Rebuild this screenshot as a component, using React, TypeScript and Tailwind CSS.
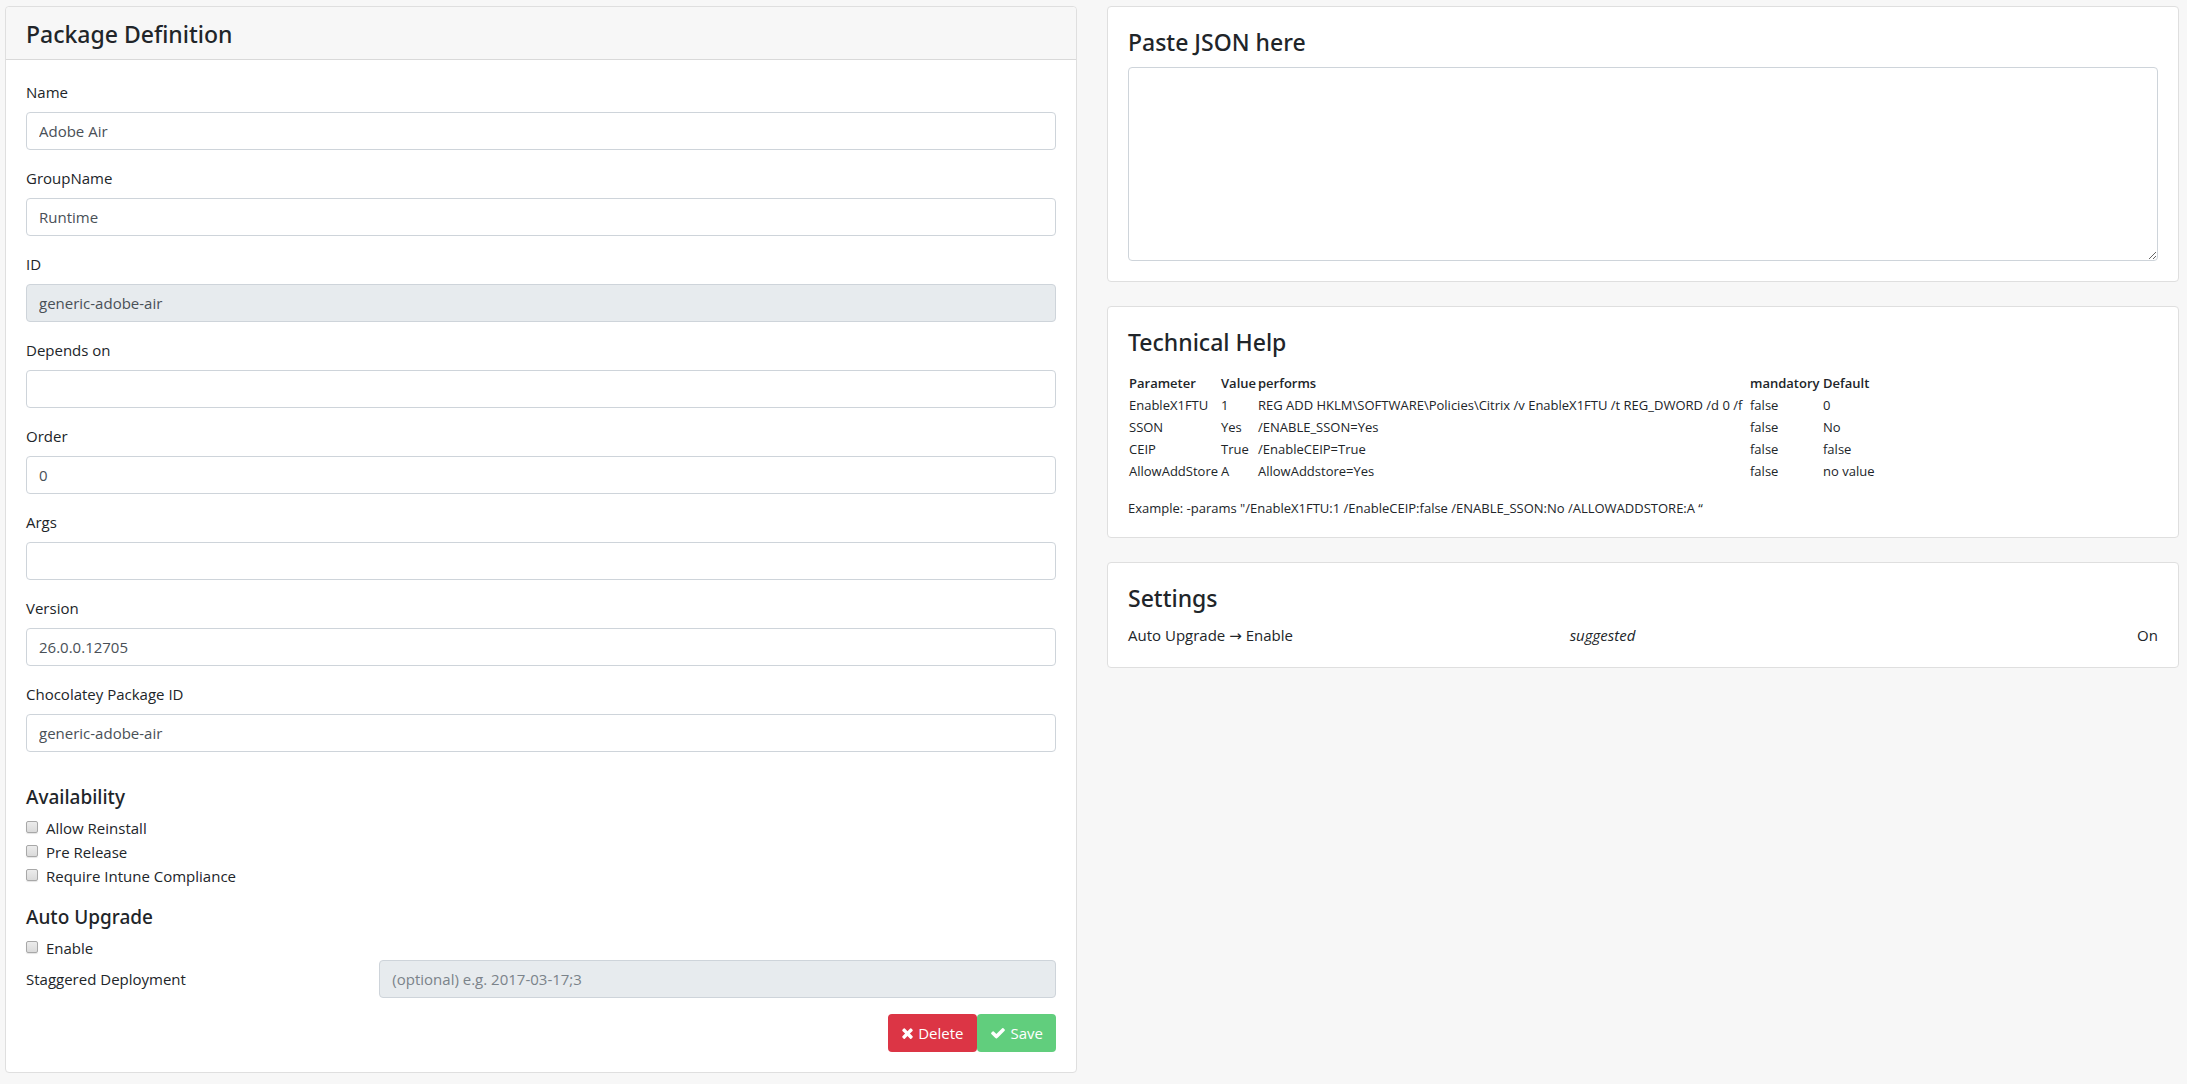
import { useState } from "react";
import type { ReactNode } from "react";

type Field = { id: string; label: string; value: string; disabled?: boolean };

const fields: Field[] = [
  { id: "name", label: "Name", value: "Adobe Air" },
  { id: "group", label: "GroupName", value: "Runtime" },
  { id: "id", label: "ID", value: "generic-adobe-air", disabled: true },
  { id: "depends", label: "Depends on", value: "" },
  { id: "order", label: "Order", value: "0" },
  { id: "args", label: "Args", value: "" },
  { id: "version", label: "Version", value: "26.0.0.12705" },
  { id: "choco", label: "Chocolatey Package ID", value: "generic-adobe-air" },
];

const helpRows = [
  ["EnableX1FTU", "1", "REG ADD HKLM\\SOFTWARE\\Policies\\Citrix /v EnableX1FTU /t REG_DWORD /d 0 /f", "false", "0"],
  ["SSON", "Yes", "/ENABLE_SSON=Yes", "false", "No"],
  ["CEIP", "True", "/EnableCEIP=True", "false", "false"],
  ["AllowAddStore", "A", "AllowAddstore=Yes", "false", "no value"],
];

const control =
  "block w-full rounded border border-[#ced4da] bg-white px-3 text-[15px] leading-6 text-[#495057] outline-none placeholder:text-[#7b838a] focus:border-[#80bdff] disabled:bg-[#e7ebee]";

const title = "font-['Noto_Sans','Open_Sans',sans-serif] text-[23px] leading-[30px] font-medium";
const subtitle = "mb-1.5 font-['Noto_Sans','Open_Sans',sans-serif] text-[19px] leading-[26px] font-medium";

function Card({ children }: { children: ReactNode }) {
  return <section className="rounded border border-[#dfdfdf] bg-white">{children}</section>;
}

function TextField({ field }: { field: Field }) {
  const [value, setValue] = useState(field.value);
  return (
    <div className="mb-4">
      <label htmlFor={field.id} className="mb-2 block">
        {field.label}
      </label>
      <input
        id={field.id}
        type="text"
        value={value}
        disabled={field.disabled}
        onChange={(e) => setValue(e.target.value)}
        className={`${control} h-[38px]`}
      />
    </div>
  );
}

function Check({ label }: { label: string }) {
  return (
    <label className="flex items-start">
      <input
        type="checkbox"
        className="mt-[5px] mr-2 size-3 appearance-none rounded-xs border border-[#a8a8a8] bg-linear-to-b from-[#ececec] to-[#dadada] shadow-[0_1px_1px_#e4e4e4] checked:bg-[#0075ff] checked:bg-none"
      />
      {label}
    </label>
  );
}

export default function App() {
  return (
    <main className="min-h-screen bg-[#f7f7f7] pt-[6px] pr-2 pb-[11px] pl-[5px] font-['Open_Sans',sans-serif] text-[15px] leading-6 text-[#212529]">
      <div className="grid grid-cols-2 items-start gap-[30px]">
        <Card>
          <header className="rounded-t border-b border-[#d9d9d9] bg-[#f7f7f7] px-5 pt-3 pb-2.5">
            <h1 className={title}>Package Definition</h1>
          </header>
          <form className="p-5" onSubmit={(e) => e.preventDefault()}>
            {fields.map((f) => (
              <TextField key={f.id} field={f} />
            ))}

            <h2 className={`mt-8 ${subtitle}`}>Availability</h2>
            <Check label="Allow Reinstall" />
            <Check label="Pre Release" />
            <Check label="Require Intune Compliance" />

            <h2 className={`mt-4 ${subtitle}`}>Auto Upgrade</h2>
            <Check label="Enable" />
            <div className="-mx-[15px] flex items-center">
              <label htmlFor="staggered" className="w-1/3 px-[15px]">
                Staggered Deployment
              </label>
              <div className="w-2/3 px-[15px]">
                <input
                  id="staggered"
                  type="text"
                  disabled
                  placeholder="(optional) e.g. 2017-03-17;3"
                  className={`${control} h-[38px]`}
                />
              </div>
            </div>

            <div className="mt-4 flex justify-end text-white">
              <button type="button" className="flex h-[38px] items-center gap-1 rounded bg-[#dc3545] px-[13px]">
                <svg viewBox="192 0 1408 1792" className="h-4 w-[13px] fill-current" aria-hidden="true">
                  <path d="M1490 1322q0 40-28 68l-136 136q-28 28-68 28t-68-28l-294-294-294 294q-28 28-68 28t-68-28l-136-136q-28-28-28-68t28-68l294-294-294-294q-28-28-28-68t28-68l136-136q28-28 68-28t68 28l294 294 294-294q28-28 68-28t68 28l136 136q28 28 28 68t-28 68l-294 294 294 294q28 28 28 68z" />
                </svg>
                Delete
              </button>
              <button type="submit" className="flex h-[38px] items-center gap-[5px] rounded bg-[#61ce7d] px-[13px]">
                <svg viewBox="0 0 1792 1792" className="size-4 fill-current" aria-hidden="true">
                  <path d="M1671 566q0 40-28 68l-724 724-136 136q-28 28-68 28t-68-28l-136-136-362-362q-28-28-28-68t28-68l136-136q28-28 68-28t68 28l294 295 656-657q28-28 68-28t68 28l136 136q28 28 28 68z" />
                </svg>
                Save
              </button>
            </div>
          </form>
        </Card>

        <div className="flex flex-col gap-6">
          <Card>
            <div className="p-5">
              <label htmlFor="json" className={`mb-2.5 block ${title}`}>
                Paste JSON here
              </label>
              <textarea id="json" className={`${control} h-[194px] resize-y py-[6px]`} />
            </div>
          </Card>

          <Card>
            <div className="px-5 pt-5 pb-[19px]">
              <h2 className={`mb-[15px] ${title}`}>Technical Help</h2>
              <table className="w-[748px] table-fixed border-collapse text-left text-[13px] leading-5 whitespace-nowrap">
                <colgroup>
                  <col className="w-[92px]" />
                  <col className="w-[37px]" />
                  <col className="w-[492px]" />
                  <col className="w-[73px]" />
                  <col className="w-[54px]" />
                </colgroup>
                <thead>
                  <tr>
                    {["Parameter", "Value", "performs", "mandatory", "Default"].map((h) => (
                      <th key={h} className="p-px font-semibold">
                        {h}
                      </th>
                    ))}
                  </tr>
                </thead>
                <tbody>
                  {helpRows.map((row) => (
                    <tr key={row[0]}>
                      {row.map((cell, i) => (
                        <td key={i} className="p-px">
                          {cell}
                        </td>
                      ))}
                    </tr>
                  ))}
                </tbody>
              </table>
              <p className="mt-4 text-[13px] leading-5">
                Example: -params "/EnableX1FTU:1 /EnableCEIP:false /ENABLE_SSON:No /ALLOWADDSTORE:A “
              </p>
            </div>
          </Card>

          <Card>
            <div className="p-5">
              <h2 className={`mb-2.5 ${title}`}>Settings</h2>
              <div className="-mx-[15px] flex">
                <div className="w-5/12 px-[15px]">
                  Auto Upgrade <span className="font-['DejaVu_Sans',sans-serif] leading-none">→</span> Enable
                </div>
                <div className="w-5/12 px-[15px] italic">suggested</div>
                <div className="w-2/12 px-[15px] text-right">On</div>
              </div>
            </div>
          </Card>
        </div>
      </div>
    </main>
  );
}
